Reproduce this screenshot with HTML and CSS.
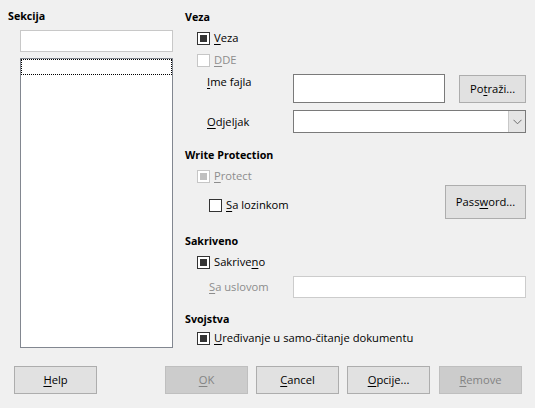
FILE: index.html
```html
<!DOCTYPE html>
<html>
<head>
<meta charset="utf-8">
<link rel="stylesheet" href="styles.css">
</head>
<body>
<div class="dialog">
  <div class="main">
    <div class="left">
      <div class="hdr hdr-sec">Sekcija</div>
      <div class="sec-input"></div>
      <div class="sec-list"><div class="focus"></div></div>
    </div>
    <div class="right">
      <div class="hdr hdr-veza">Veza</div>
      <div class="chk row-veza"><span class="box checked"></span><span><u>V</u>eza</span></div>
      <div class="chk row-dde disabled"><span class="box"></span><span><u>D</u>DE</span></div>
      <div class="row row-file">
        <span class="lbl lbl-top"><u>I</u>me fajla</span>
        <div class="field field-file"></div>
        <div class="btn btn-browse">Po<u>t</u>raži...</div>
      </div>
      <div class="row row-odj">
        <span class="lbl"><u>O</u>djeljak</span>
        <div class="combo"><div class="combo-text"></div><div class="combo-btn"><svg width="9" height="6" viewBox="0 0 9 6"><path d="M0.5 0.8 L4.5 4.8 L8.5 0.8" fill="none" stroke="#6d6d6d" stroke-width="1"/></svg></div></div>
      </div>
      <div class="hdr hdr-wp">Write Protection</div>
      <div class="chk row-protect disabled"><span class="box checked"></span><span><u>P</u>rotect</span></div>
      <div class="row row-pass">
        <div class="chk chk-loz"><span class="box"></span><span><u>S</u>a lozinkom</span></div>
        <div class="btn btn-pass">Pass<u>w</u>ord...</div>
      </div>
      <div class="hdr hdr-sak">Sakriveno</div>
      <div class="chk row-sak"><span class="box checked"></span><span>Sakrive<u>n</u>o</span></div>
      <div class="row row-cond">
        <span class="lbl lbl-cond"><u>S</u>a uslovom</span>
        <div class="field field-cond"></div>
      </div>
      <div class="hdr hdr-svo">Svojstva</div>
      <div class="chk row-edit"><span class="box checked"></span><span><u>U</u>ređivanje u samo-čitanje dokumentu</span></div>
    </div>
  </div>
  <div class="buttons">
    <div class="btn bb btn-help"><u>H</u>elp</div>
    <div class="btn bb btn-ok off"><u>O</u>K</div>
    <div class="btn bb btn-cancel"><u>C</u>ancel</div>
    <div class="btn bb btn-opt"><u>O</u>pcije...</div>
    <div class="btn bb btn-remove off"><u>R</u>emove</div>
  </div>
</div>
</body>
</html>
```

FILE: styles.css
```css
html, body {
  margin: 0;
  padding: 0;
  background: #f0f0f0;
}
body {
  font-family: "Open Sans", "Noto Sans", sans-serif;
  font-size: 11.2px;
  line-height: 16px;
  color: #000;
}
u { text-decoration-thickness: 1px; text-underline-offset: 2px; }
.dialog {
  width: 535px;
  height: 408px;
  display: flex;
  flex-direction: column;
}
.main {
  display: flex;
  height: 366px;
}
.left {
  width: 173px;
  padding-left: 8px;
  box-sizing: border-box;
  display: flex;
  flex-direction: column;
}
.right {
  margin-left: 12px;
  width: 341px;
  display: flex;
  flex-direction: column;
}
.hdr {
  font-weight: 700;
  font-size: 10.7px;
  height: 16px;
}
.hdr-sec { margin-top: 8px; }
.sec-input {
  margin-top: 6px;
  margin-left: 12px;
  height: 22px;
  box-sizing: border-box;
  border: 1px solid #c8c8c8;
  background: #fff;
}
.sec-list {
  margin-top: 6px;
  margin-left: 12px;
  height: 290px;
  box-sizing: border-box;
  border: 1px solid #828790;
  background: #fff;
}
.focus {
  height: 16px;
  box-sizing: border-box;
  border: 1px dotted #000;
}
.hdr-veza { margin-top: 9px; }
.chk {
  display: flex;
  align-items: center;
  height: 16px;
  margin-left: 12px;
}
.box {
  width: 13px;
  height: 13px;
  box-sizing: border-box;
  border: 1px solid #333;
  background: #fff;
  padding: 2px;
  margin-right: 4px;
  flex: none;
}
.box.checked::after {
  content: "";
  display: block;
  width: 7px;
  height: 7px;
  background: #333;
}
.disabled { color: #8d8d8d; }
.disabled .box { border-color: #c6c6c6; }
.disabled .box.checked::after { background: #c0c0c0; }
.row-veza { margin-top: 5px; }
.row-dde { margin-top: 6px; }
.row {
  display: flex;
  align-items: center;
}
.lbl { margin-left: 22px; }
.row-file {
  margin-top: 6px;
  height: 29px;
  align-items: flex-start;
}
.lbl-top { width: 86px; }
.field {
  box-sizing: border-box;
  background: #fff;
  border: 1px solid #7a7a7a;
}
.field-file {
  width: 152px;
  height: 29px;
}
.btn {
  box-sizing: border-box;
  background: #e1e1e1;
  border: 1px solid #adadad;
  display: flex;
  align-items: center;
  justify-content: center;
}
.btn-browse {
  margin-left: 14px;
  width: 67px;
  height: 28px;
  margin-top: 1px;
}
.row-odj {
  margin-top: 7px;
  height: 23px;
}
.row-odj .lbl { width: 86px; }
.combo {
  width: 233px;
  height: 23px;
  box-sizing: border-box;
  border: 1px solid #7a7a7a;
  background: #fff;
  display: flex;
}
.combo-text { flex: 1; }
.combo-btn {
  width: 16px;
  background: #e5e5e5;
  border-left: 1px solid #c8c8c8;
  display: flex;
  align-items: center;
  justify-content: center;
}
.hdr-wp { margin-top: 14px; }
.row-protect { margin-top: 5px; }
.row-pass {
  margin-top: 1px;
  height: 34px;
  align-items: flex-start;
  justify-content: space-between;
}
.chk-loz {
  margin-left: 24px;
  margin-top: 12px;
}
.btn-pass {
  width: 81px;
  height: 34px;
}
.hdr-sak { margin-top: 14px; }
.row-sak { margin-top: 5px; }
.row-cond {
  margin-top: 6px;
  height: 22px;
}
.lbl-cond {
  margin-left: 24px;
  width: 84px;
  color: #8d8d8d;
}
.field-cond {
  width: 234px;
  height: 22px;
  border-color: #cccccc;
}
.hdr-svo { margin-top: 13px; }
.row-edit { margin-top: 3px; }
.buttons {
  display: flex;
  height: 28px;
  padding-left: 14px;
}
.bb {
  width: 83px;
  height: 28px;
}
.btn-ok { margin-left: 68px; }
.btn-cancel { margin-left: 8px; }
.btn-opt { margin-left: 8px; }
.btn-remove { margin-left: 9px; }
.off {
  background: #cccccc;
  border-color: #bfbfbf;
  color: #838383;
}
```
